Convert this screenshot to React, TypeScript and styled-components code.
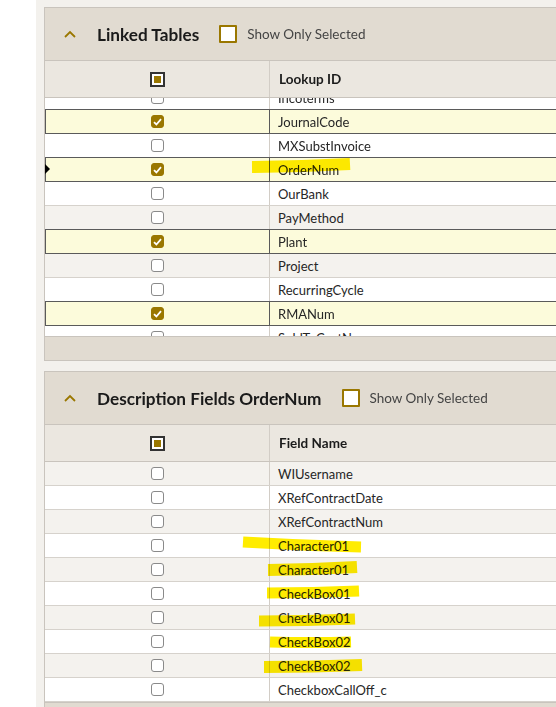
import React, { FC } from 'react';
import styled, { createGlobalStyle } from 'styled-components';

const GOLD = '#9a7700';

const GlobalStyle = createGlobalStyle`
  html, body {
    margin: 0;
    padding: 0;
    background: #fff;
    overflow: hidden;
  }
  body {
    font-family: Lato, "Noto Sans", "Liberation Sans", sans-serif;
    color: #2b2b2b;
  }
`;

const Page = styled.div`
  display: flex;
  width: 556px;
  height: 707px;
  overflow: hidden;
  background: #fff;
`;

const Gutter = styled.div`
  width: 36px;
  flex-shrink: 0;
  background: #fff;
`;

const Workspace = styled.div`
  flex: 1;
  min-width: 0;
  display: flex;
  flex-direction: column;
  gap: 10px;
  padding: 7px 0 0 8px;
  background: #f3f1ed;
`;

const Panel = styled.section`
  width: 560px;
  flex-shrink: 0;
  border: 1px solid #c9c4bd;
  border-right: none;
  background: #e1dbd1;
`;

const PanelHeader = styled.div`
  height: 52px;
  display: flex;
  align-items: center;
  padding-left: 19px;
`;

const Chevron = styled.svg`
  width: 12px;
  height: 8px;
  margin-right: 21px;
  flex-shrink: 0;
`;

const Title = styled.h2`
  margin: 0 20px 0 0;
  font-size: 17.2px;
  font-weight: 700;
  color: #1a1a1a;
  white-space: nowrap;
`;

const ToggleBox = styled.span`
  width: 18px;
  height: 18px;
  box-sizing: border-box;
  border: 2px solid ${GOLD};
  border-radius: 1px;
  background: #fff;
  flex-shrink: 0;
  margin-right: 10px;
`;

const ToggleLabel = styled.span`
  font-size: 13.5px;
  color: #444;
  white-space: nowrap;
`;

const GridHeader = styled.div`
  height: 36px;
  display: flex;
  border-top: 1px solid #c9c4bd;
  border-bottom: 1px solid #c9c4bd;
  background: #ebe7e0;
`;

const CheckCell = styled.div`
  width: 225px;
  flex-shrink: 0;
  display: flex;
  align-items: center;
  justify-content: center;
  border-right: 1px solid #d2cdc6;
  box-sizing: border-box;
`;

const HeaderText = styled.div`
  display: flex;
  align-items: center;
  padding-left: 9px;
  font-size: 13.5px;
  font-weight: 700;
  color: #1b1b1b;
`;

const AllBox = styled.span`
  width: 15px;
  height: 15px;
  box-sizing: border-box;
  border: 2px solid #333;
  background: #fff;
  display: flex;
  align-items: center;
  justify-content: center;
  &::after {
    content: '';
    width: 7px;
    height: 7px;
    background: ${GOLD};
  }
`;

const GridBody = styled.div<{ $height: number }>`
  height: ${(p) => p.$height}px;
  overflow: hidden;
  background: #fff;
`;

const RowList = styled.div<{ $offset: number }>`
  margin-top: ${(p) => p.$offset}px;
`;

const Row = styled.div<{ $stripe: boolean; $selected: boolean }>`
  position: relative;
  height: 24px;
  box-sizing: border-box;
  display: flex;
  border-bottom: 1px solid ${(p) => (p.$selected ? '#5a5a5a' : '#d6d2cc')};
  background: ${(p) => (p.$selected ? '#fcfbdb' : p.$stripe ? '#f4f2ee' : '#fff')};
  box-shadow: ${(p) => (p.$selected ? '0 -1px 0 #5a5a5a, inset 1px 0 0 #5a5a5a' : 'none')};
  ${CheckCell} {
    border-right-color: ${(p) => (p.$selected ? '#5a5a5a' : '#d2cdc6')};
  }
`;

const CellText = styled.div`
  display: flex;
  align-items: center;
  padding-left: 8px;
  font-size: 13px;
  color: #262626;
  white-space: nowrap;
`;

const RowBox = styled.span<{ $checked: boolean }>`
  width: 13px;
  height: 13px;
  box-sizing: border-box;
  border-radius: 3px;
  border: 1.5px solid ${(p) => (p.$checked ? GOLD : '#8a8a8a')};
  background: ${(p) => (p.$checked ? GOLD : '#fff')};
  display: flex;
  align-items: center;
  justify-content: center;
`;

const Marker = styled.span`
  position: absolute;
  left: 0;
  top: 6px;
  width: 0;
  height: 0;
  border-top: 5px solid transparent;
  border-bottom: 5px solid transparent;
  border-left: 5px solid #000;
`;

const Scribble = styled.svg`
  position: absolute;
  left: 0;
  top: 0;
  width: 100%;
  height: 100%;
  overflow: visible;
  pointer-events: none;
  mix-blend-mode: multiply;
`;

const GridFooter = styled.div`
  height: 23px;
  border-top: 1px solid #c9c4bd;
  background: #e1dbd1;
`;

type Mark = [number, number, number, number, number];

interface IRow {
  name: string;
  checked?: boolean;
  stripe?: boolean;
  current?: boolean;
  mark?: Mark;
}

const linkedRows: IRow[] = [
  { name: 'Incoterms' },
  { name: 'JournalCode', checked: true, stripe: true },
  { name: 'MXSubstInvoice' },
  { name: 'OrderNum', checked: true, stripe: true, current: true, mark: [207, 9, 305, 6, 12] },
  { name: 'OurBank' },
  { name: 'PayMethod', stripe: true },
  { name: 'Plant', checked: true },
  { name: 'Project', stripe: true },
  { name: 'RecurringCycle' },
  { name: 'RMANum', checked: true, stripe: true },
  { name: 'SoldToCustNum' },
];

const fieldRows: IRow[] = [
  { name: 'WIUsername', stripe: true },
  { name: 'XRefContractDate' },
  { name: 'XRefContractNum', stripe: true },
  { name: 'Character01', mark: [198, 8, 316, 13, 11] },
  { name: 'Character01', stripe: true, mark: [223, 12, 312, 9, 12] },
  { name: 'CheckBox01', mark: [222, 11, 314, 9, 11] },
  { name: 'CheckBox01', stripe: true, mark: [214, 15, 310, 13, 11] },
  { name: 'CheckBox02', mark: [225, 12, 306, 12, 11] },
  { name: 'CheckBox02', stripe: true, mark: [219, 13, 317, 11, 12] },
  { name: 'CheckboxCallOff_c' },
];

const Check = () => (
  <svg width="9" height="8" viewBox="0 0 9 8">
    <path d="M1 4.2 L3.4 6.5 L8 1.2" fill="none" stroke="#fff" strokeWidth="1.8" />
  </svg>
);

interface IGridProps {
  title: string;
  column: string;
  rows: IRow[];
  bodyHeight: number;
  offset: number;
}

const GridPanel: FC<IGridProps> = ({ title, column, rows, bodyHeight, offset }) => (
  <Panel>
    <PanelHeader>
      <Chevron viewBox="0 0 12 8">
        <polyline points="1,7 6,2 11,7" fill="none" stroke={GOLD} strokeWidth="1.8" />
      </Chevron>
      <Title>{title}</Title>
      <ToggleBox />
      <ToggleLabel>Show Only Selected</ToggleLabel>
    </PanelHeader>
    <GridHeader>
      <CheckCell>
        <AllBox />
      </CheckCell>
      <HeaderText>{column}</HeaderText>
    </GridHeader>
    <GridBody $height={bodyHeight}>
      <RowList $offset={offset}>
        {rows.map((row, i) => (
          <Row key={i} $stripe={!!row.stripe} $selected={!!row.checked}>
            {row.current && <Marker />}
            <CheckCell>
              <RowBox $checked={!!row.checked}>{row.checked && <Check />}</RowBox>
            </CheckCell>
            <CellText>{row.name}</CellText>
            {row.mark && (
              <Scribble>
                <path
                  d={`M${row.mark[0]} ${row.mark[1]} Q ${(row.mark[0] + row.mark[2]) / 2} ${
                    (row.mark[1] + row.mark[3]) / 2 + 1
                  } ${row.mark[2]} ${row.mark[3]}`}
                  fill="none"
                  stroke="#ffec00"
                  strokeWidth={row.mark[4]}
                />
              </Scribble>
            )}
          </Row>
        ))}
      </RowList>
    </GridBody>
    <GridFooter />
  </Panel>
);

export default function App() {
  return (
    <>
      <GlobalStyle />
      <Page>
        <Gutter />
        <Workspace>
          <GridPanel title="Linked Tables" column="Lookup ID" rows={linkedRows} bodyHeight={238} offset={-12} />
          <GridPanel
            title="Description Fields OrderNum"
            column="Field Name"
            rows={fieldRows}
            bodyHeight={240}
            offset={0}
          />
        </Workspace>
      </Page>
    </>
  );
}
